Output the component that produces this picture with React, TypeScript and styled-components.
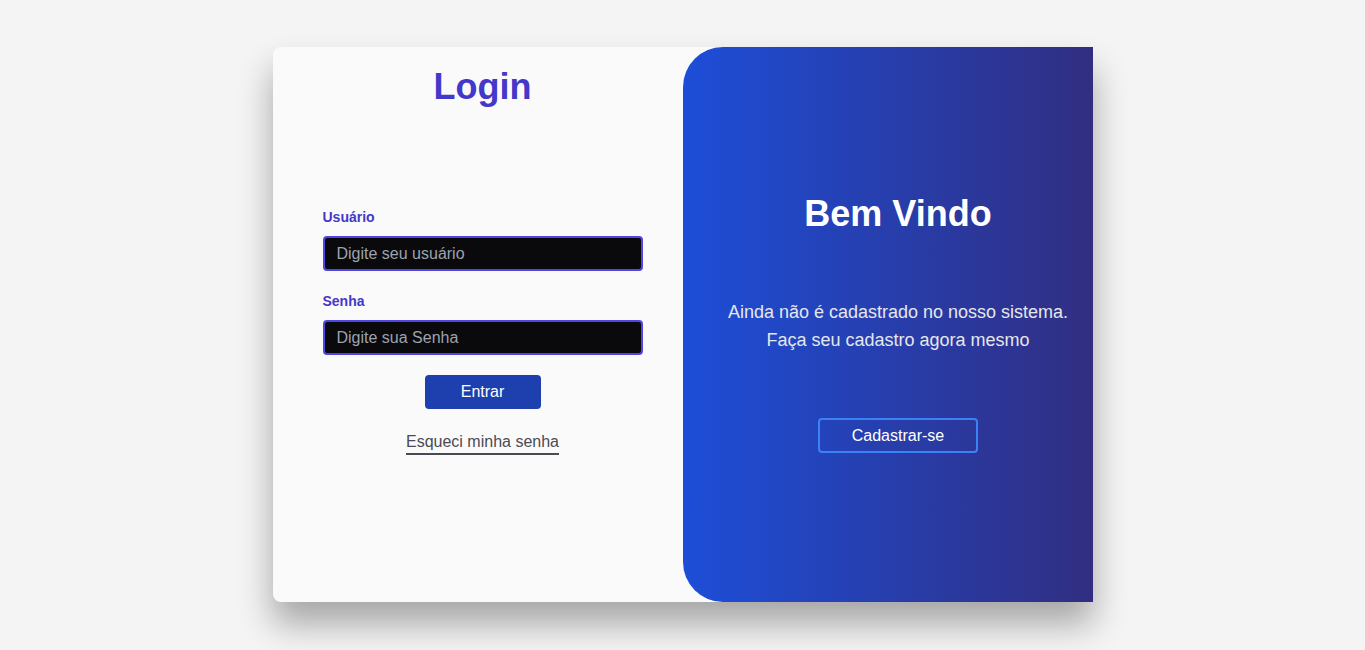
import React from "react";
import styled, { createGlobalStyle } from "styled-components";

const Global = createGlobalStyle`
  * { box-sizing: border-box; }
  html, body { margin: 0; padding: 0; }
  body {
    background: #f4f4f4;
    font-family: "Liberation Sans", Arial, sans-serif;
  }
`;

const Page = styled.div`
  height: 650px;
  display: flex;
  align-items: flex-start;
  justify-content: center;
  padding-top: 47px;
`;

const Card = styled.div`
  width: 820px;
  height: 555px;
  display: flex;
  background: #fafafa;
  border-radius: 8px 0 0 8px;
  box-shadow: 0 22px 34px rgba(0, 0, 0, 0.32);
`;

const LeftPane = styled.div`
  width: 410px;
  display: flex;
  flex-direction: column;
  align-items: center;
  padding: 19px 0 0 10px;
`;

const Title = styled.h1`
  margin: 0;
  font-size: 36px;
  line-height: 41px;
  font-weight: 700;
  color: #4338ca;
`;

const Form = styled.form`
  width: 320px;
  margin-top: 102px;
  display: flex;
  flex-direction: column;
`;

const Label = styled.label<{ $top?: number }>`
  font-size: 14px;
  line-height: 16px;
  font-weight: 700;
  color: #4338ca;
  margin-top: ${(p) => p.$top ?? 0}px;
`;

const Input = styled.input`
  margin-top: 11px;
  height: 35px;
  width: 320px;
  background: #0a0a0c;
  border: 2px solid #4f46e5;
  border-radius: 4px;
  padding: 0 12px;
  color: #e5e7eb;
  font-family: inherit;
  font-size: 16px;
  outline: none;
  &::placeholder { color: #9ca3af; }
`;

const Submit = styled.button`
  align-self: center;
  margin-top: 20px;
  width: 116px;
  height: 34px;
  background: #1e40af;
  color: #ffffff;
  border: none;
  border-radius: 4px;
  font-family: inherit;
  font-size: 16px;
`;

const Forgot = styled.a`
  align-self: center;
  margin-top: 23px;
  font-size: 16px;
  line-height: 20px;
  color: #4a4a52;
  text-decoration: none;
  border-bottom: 2px solid #4a4a52;
  padding-bottom: 1px;
`;

const RightPane = styled.div`
  width: 410px;
  display: flex;
  flex-direction: column;
  align-items: center;
  padding-left: 21px;
  border-radius: 40px 0 0 40px;
  background: linear-gradient(to right, #1d4ed8, #312e81);
  color: #ffffff;
`;

const Welcome = styled.h2`
  margin: 146px 0 0;
  font-size: 36px;
  line-height: 42px;
  font-weight: 700;
`;

const Text = styled.p`
  margin: 63px 0 0;
  font-size: 18px;
  line-height: 28px;
  text-align: center;
  color: #e5e7eb;
`;

const Outline = styled.button`
  margin-top: 64px;
  width: 160px;
  height: 35px;
  background: transparent;
  border: 2px solid #3b82f6;
  border-radius: 4px;
  color: #ffffff;
  font-family: inherit;
  font-size: 16px;
`;

export default function App() {
  return (
    <>
      <Global />
      <Page>
        <Card>
          <LeftPane>
            <Title>Login</Title>
            <Form onSubmit={(e) => e.preventDefault()}>
              <Label>Usuário</Label>
              <Input placeholder="Digite seu usuário" />
              <Label $top={22}>Senha</Label>
              <Input type="password" placeholder="Digite sua Senha" />
              <Submit type="submit">Entrar</Submit>
              <Forgot href="#">Esqueci minha senha</Forgot>
            </Form>
          </LeftPane>
          <RightPane>
            <Welcome>Bem Vindo</Welcome>
            <Text>
              Ainda não é cadastrado no nosso sistema.
              <br />
              Faça seu cadastro agora mesmo
            </Text>
            <Outline>Cadastrar-se</Outline>
          </RightPane>
        </Card>
      </Page>
    </>
  );
}
